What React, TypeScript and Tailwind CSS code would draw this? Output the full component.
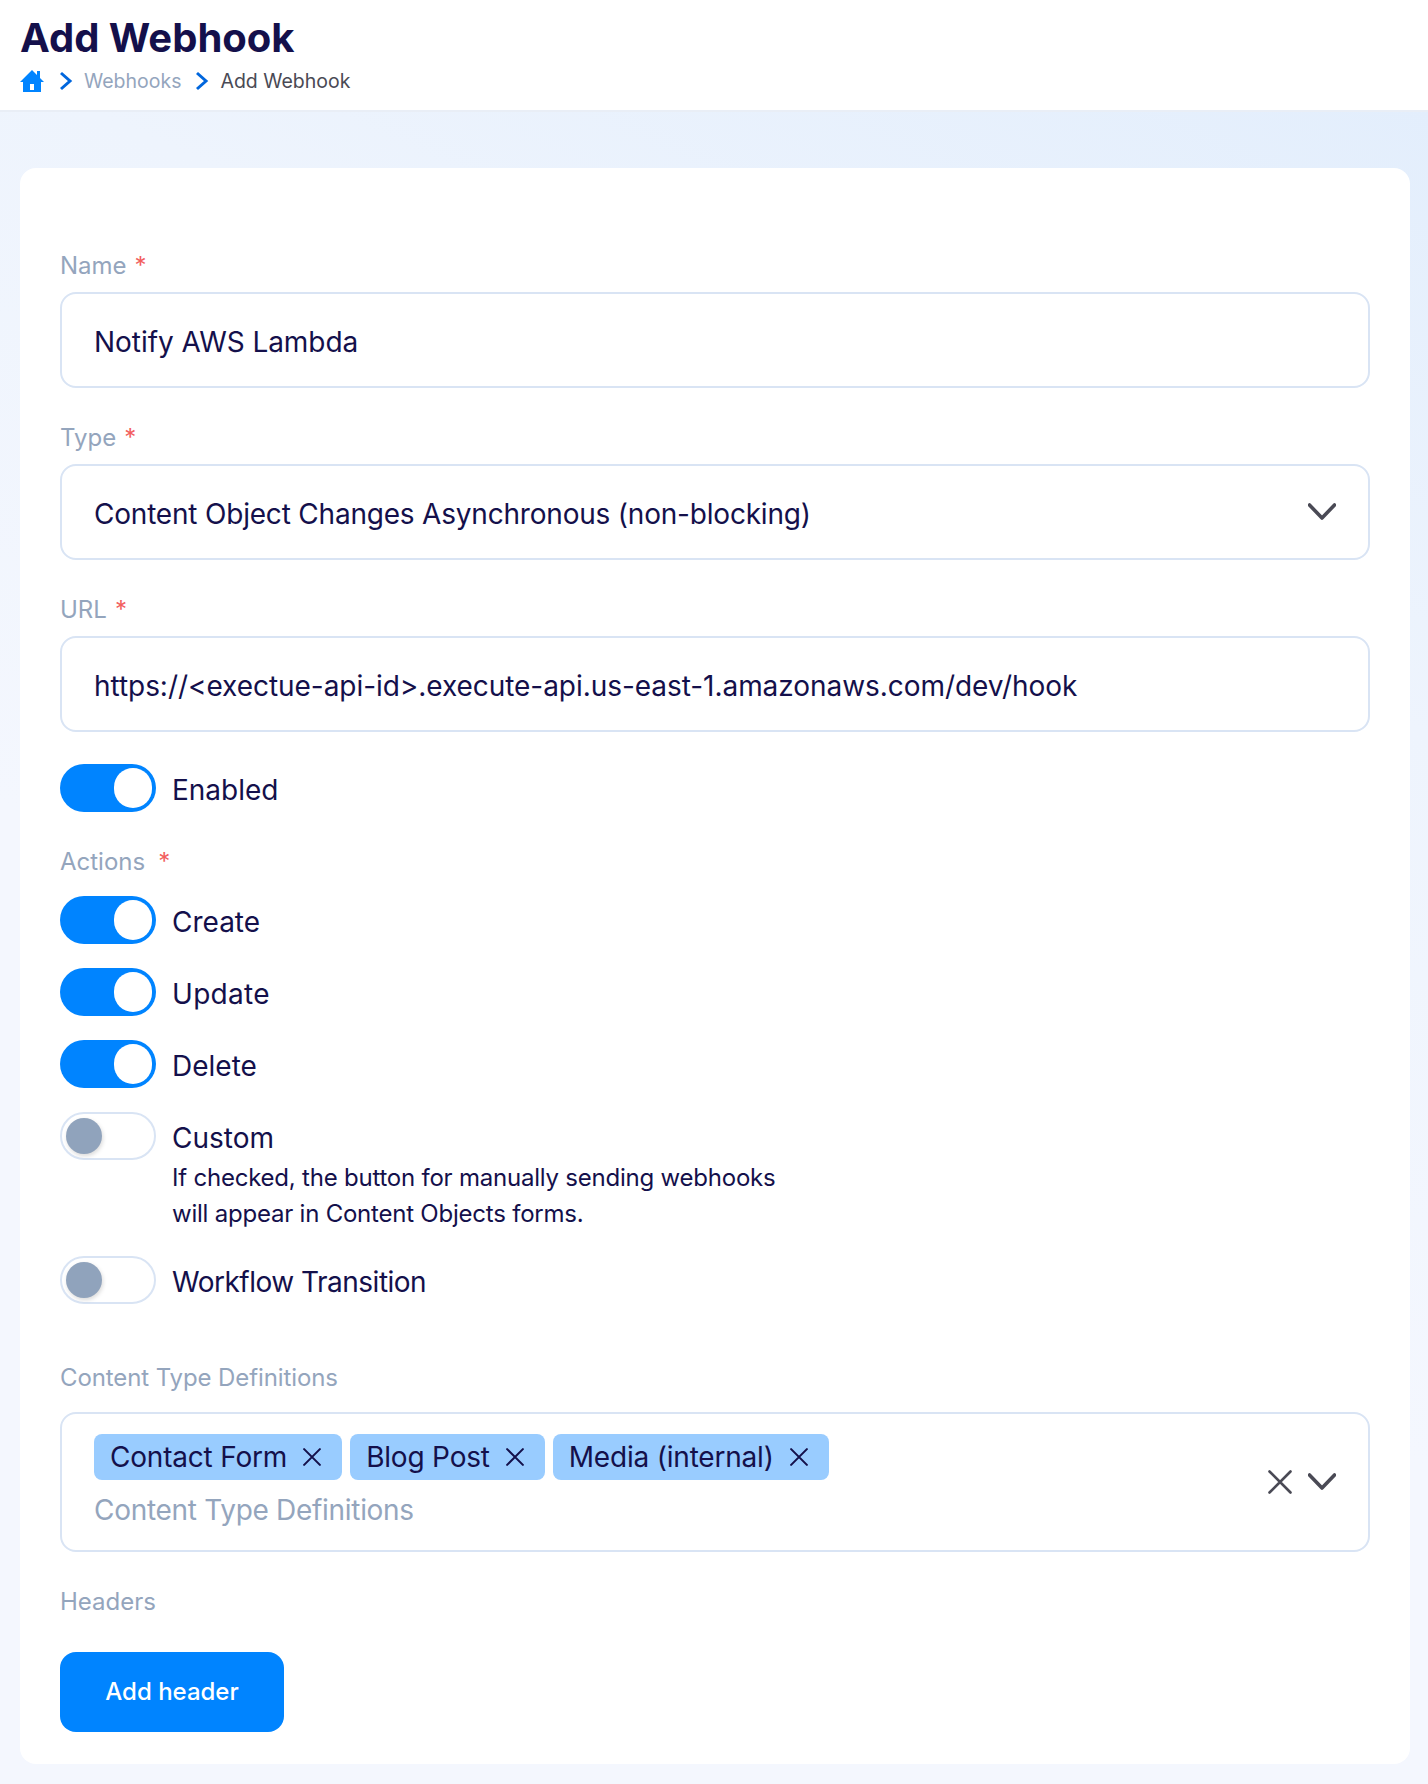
import React from 'react';

const FONT = "font-['Inter','Liberation_Sans',sans-serif]";

const Chevron = () => (
  <svg width="28" height="18" viewBox="0 0 28 18" fill="none" className="shrink-0">
    <path d="M1.5 2 L14 15 L26.5 2" stroke="#4a4a55" strokeWidth="3.6" strokeLinejoin="round" strokeLinecap="round" />
  </svg>
);

const Cross = ({ size, width, color }: { size: number; width: number; color: string }) => (
  <svg width={size} height={size} viewBox="0 0 24 24" fill="none" className="shrink-0">
    <path d="M1.5 1.5 L22.5 22.5 M22.5 1.5 L1.5 22.5" stroke={color} strokeWidth={width} strokeLinecap="round" />
  </svg>
);

const Crumb = () => (
  <svg width="14" height="20" viewBox="0 0 14 20" fill="none" className="shrink-0">
    <path d="M2 2 L11 10 L2 18" stroke="#0066dd" strokeWidth="3" />
  </svg>
);

const Label = ({ text, required, gap = 'ml-2', className = '' }: { text: string; required?: boolean; gap?: string; className?: string }) => (
  <div className={`flex h-7 items-center text-[24px] text-[#94a5bd] ${className}`}>
    <span>{text}</span>
    {required && <span className={`${gap} text-[#f25f5f]`}>*</span>}
  </div>
);

const Field = ({ children }: { children: React.ReactNode }) => (
  <div className="mt-3 flex h-24 items-center justify-between rounded-2xl border-2 border-[#d9e4f4] bg-white px-8 text-[28px] text-[#14104b]">
    {children}
  </div>
);

const Toggle = ({ on }: { on: boolean }) =>
  on ? (
    <div className="flex h-12 w-24 shrink-0 items-center justify-end rounded-full bg-[#0084ff] pr-1">
      <div className="h-10 w-[38px] rounded-full bg-white" />
    </div>
  ) : (
    <div className="flex h-12 w-24 shrink-0 items-center rounded-full border-2 border-[#d9e4f4] bg-white pl-1">
      <div className="size-9 rounded-full bg-[#90a3bc] shadow-[1px_2px_4px_rgba(0,0,0,0.15)]" />
    </div>
  );

const ToggleRow = ({ on, text, textClass = '', children }: { on: boolean; text: string; textClass?: string; children?: React.ReactNode }) => (
  <div className="flex items-start gap-4">
    <Toggle on={on} />
    <div className="text-[#14104b]">
      <div className={`mt-[8px] h-9 text-[28px] leading-9 ${textClass}`}>{text}</div>
      {children}
    </div>
  </div>
);

const Chip = ({ text }: { text: string }) => (
  <div className="flex h-[46px] items-center gap-4 rounded-lg bg-[#99ccff] pl-4 pr-[21px] text-[28px] tracking-[-0.2px] text-[#14104b]">
    <span>{text}</span>
    <Cross size={18} width={2.8} color="#14104b" />
  </div>
);

export default function App() {
  return (
    <div className={`${FONT} min-h-[1784px] bg-[linear-gradient(205deg,#e1edfc_0%,#eef4fd_30%,#f4f7fe_60%,#f4f7fe_100%)]`}>
      <header className="h-[112px] border-b-2 border-[#e9eef6] bg-white pl-5 pt-[14px]">
        <h1 className="text-[40px] font-bold leading-12 text-[#14104b]">Add Webhook</h1>
        <nav className="mt-[5px] flex h-7 items-center text-[19.5px]">
          <svg width="24" height="22" viewBox="0 0 24 22" className="shrink-0">
            <path
              fillRule="evenodd"
              d="M12 0 L17 5 V1 H20 V8 L24 12 H21 V22 H3 V12 H0 Z M10 14 V20 H14 V14 Z"
              fill="#0084ff"
            />
          </svg>
          <span className="ml-[15px]"><Crumb /></span>
          <span className="ml-[11px] pt-[2px] text-[#94a5bd]">Webhooks</span>
          <span className="ml-[14px]"><Crumb /></span>
          <span className="ml-[11px] pt-[2px] text-[#4a4a55]">Add Webhook</span>
        </nav>
      </header>

      <main className="pb-5 pl-5 pr-[18px] pt-14">
        <section className="h-[1596px] rounded-2xl bg-white px-10 pt-[84px]">
          <Label text="Name" required />
          <Field>
            <span className="pt-1 tracking-[-0.05px]">Notify AWS Lambda</span>
          </Field>

          <div className="mt-9">
            <Label text="Type" required />
            <Field>
              <span className="pt-1 tracking-[-0.2px]">Content Object Changes Asynchronous (non-blocking)</span>
              <Chevron />
            </Field>
          </div>

          <div className="mt-9">
            <Label text="URL" required />
            <Field>
              <span className="pt-1 tracking-[-0.05px]">https://&lt;exectue-api-id&gt;.execute-api.us-east-1.amazonaws.com/dev/hook</span>
            </Field>
          </div>

          <div className="mt-8">
            <ToggleRow on text="Enabled" />
          </div>

          <div className="mt-9">
            <Label text="Actions" required gap="ml-[13px]" />
          </div>

          <div className="mt-5 flex flex-col gap-6">
            <ToggleRow on text="Create" />
            <ToggleRow on text="Update" textClass="tracking-[0.3px]" />
            <ToggleRow on text="Delete" />
            <ToggleRow on={false} text="Custom">
              <p className="mt-[4px] text-[24px] leading-9 tracking-[-0.22px]">
                If checked, the button for manually sending webhooks
                <br />
                will appear in Content Objects forms.
              </p>
            </ToggleRow>
            <ToggleRow on={false} text="Workflow Transition" textClass="tracking-[-0.5px]" />
          </div>

          <div className="mt-[60px]">
            <Label text="Content Type Definitions" className="tracking-[-0.1px]" />
          </div>
          <div className="mt-[20px] flex h-[140px] items-center justify-between rounded-2xl border-2 border-[#d9e4f4] pl-8 pr-8">
            <div className="-mt-[3px]">
              <div className="flex gap-2">
                <Chip text="Contact Form" />
                <Chip text="Blog Post" />
                <Chip text="Media (internal)" />
              </div>
              <div className="mt-[12px] h-9 text-[28px] leading-9 tracking-[-0.3px] text-[#94a5bd]">Content Type Definitions</div>
            </div>
            <div className="flex items-center gap-4">
              <Cross size={24} width={2.6} color="#4a4a55" />
              <Chevron />
            </div>
          </div>

          <div className="mt-9">
            <Label text="Headers" />
          </div>
          <button className="mt-9 h-20 w-[224px] rounded-2xl bg-[#0084ff] text-[24px] font-medium text-white">
            Add header
          </button>
        </section>
      </main>
    </div>
  );
}
